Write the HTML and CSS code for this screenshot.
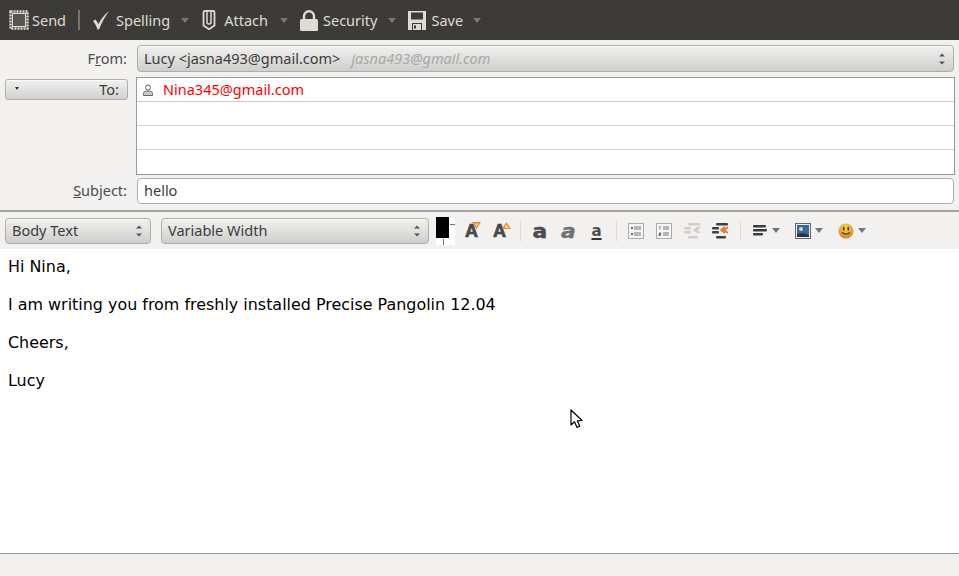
FILE: index.html
```html
<!DOCTYPE html>
<html lang="en">
<head>
<meta charset="utf-8">
<title>Write: hello</title>
<link rel="stylesheet" href="styles.css">
</head>
<body>
<header class="toolbar">
  <div class="tool send">
    <svg class="ticon" width="20" height="20" viewBox="0 0 20 20"><rect x="1.500" y="1.500" width="17" height="17" fill="none" stroke="#dfdbd2" stroke-width="2.400" stroke-dasharray="2 1"/><rect x="3.500" y="3.500" width="13" height="13" fill="#57554f" stroke="#dfdbd2"/></svg>
    <span>Send</span>
  </div>
  <div class="tsep"></div>
  <div class="tool spelling">
    <svg class="ticon" width="18" height="20" viewBox="0 0 18 20"><path d="M1 11 L3.500 9.500 L6.500 14 C9 9 12.500 4.500 17 1 C13 6.500 10 12 7 19.500 L5.500 19.500 C4.500 16.500 3 13.500 1 11 Z" fill="#dfdbd2"/></svg>
    <span>Spelling</span><i class="tarrow"></i>
  </div>
  <div class="tool attach">
    <svg class="ticon" width="14" height="20" viewBox="0 0 14 20"><path d="M1.500 2.500 C1.500 1.200 2.500 .8 3.500 .8 H10.500 C11.500 .8 12.500 1.200 12.500 2.500 V15.500 L7 19.200 L1.500 15.500 Z" fill="none" stroke="#dfdbd2" stroke-width="1.800"/><path d="M5 1 V12.500 C5 14.500 9 14.500 9 12.500 V1" fill="none" stroke="#dfdbd2" stroke-width="1.500"/></svg>
    <span>Attach</span><i class="tarrow"></i>
  </div>
  <div class="tool security">
    <svg class="ticon" width="18" height="21" viewBox="0 0 18 21"><path d="M4 10 V6.500 C4 -.5 14 -.5 14 6.500 V10" fill="none" stroke="#dfdbd2" stroke-width="2.400"/><rect x="0" y="9" width="18" height="12" rx="1.500" fill="#dfdbd2"/></svg>
    <span>Security</span><i class="tarrow"></i>
  </div>
  <div class="tool save">
    <svg class="ticon" width="18" height="19" viewBox="0 0 18 19"><path d="M0 0 H18 V19 H0 Z" fill="#dfdbd2"/><rect x="3" y="1.500" width="12" height="7" fill="#3c3b37"/><rect x="4" y="12" width="10" height="7" fill="#3c3b37"/><rect x="5" y="13" width="8" height="6" fill="#dfdbd2"/><rect x="6" y="14.500" width="2" height="3" fill="#3c3b37"/></svg>
    <span>Save</span><i class="tarrow"></i>
  </div>
</header>

<section class="headers">
  <div class="from-row">
    <label class="lbl">F<u>r</u>om:</label>
    <div class="combo from-combo">
      <span class="from-name">Lucy &lt;jasna493@gmail.com&gt;</span>
      <em class="from-ident">jasna493@gmail.com</em>
      <span class="stepper"><i class="up"></i><i class="down"></i></span>
    </div>
  </div>
  <div class="to-row">
    <div class="to-btn"><i class="mini-arrow"></i><span>To:</span></div>
    <div class="to-list">
      <div class="to-line">
        <svg class="person" width="10" height="12" viewBox="0 0 10 12"><circle cx="5" cy="3.500" r="2.500" fill="#fff" stroke="#666"/><path d="M.5 11.500 V9.500 C.5 7.500 2.500 7 5 7 C7.500 7 9.500 7.500 9.500 9.500 V11.500 Z" fill="#ccc" stroke="#666"/></svg>
        <span class="addr">Nina345@gmail.com</span>
      </div>
      <div class="to-line"></div>
      <div class="to-line"></div>
      <div class="to-line"></div>
    </div>
  </div>
  <div class="subject-row">
    <label class="lbl"><u>S</u>ubject:</label>
    <div class="subject-input">hello</div>
  </div>
</section>

<section class="format">
  <div class="combo style-combo"><span>Body Text</span><span class="stepper"><i class="up"></i><i class="down"></i></span></div>
  <div class="combo font-combo"><span>Variable Width</span><span class="stepper"><i class="up"></i><i class="down"></i></span></div>
  <div class="color-well"><span class="fg"></span><span class="tick-h"></span><span class="tick-v"></span></div>
  <div class="ficon-a">
    <span class="big-a">A</span><svg class="a-badge" width="9" height="7" viewBox="0 0 9 7"><path d="M0 0 H9 L4.500 7 Z" fill="#f08a24"/><path d="M2.500 1.500 H6.500 L4.500 4.500 Z" fill="#f7d9a8"/></svg>
  </div>
  <div class="ficon-a second">
    <span class="big-a">A</span><svg class="a-badge" width="9" height="7" viewBox="0 0 9 7"><path d="M0 7 H9 L4.500 0 Z" fill="#f08a24"/><path d="M2.500 6 H6.500 L4.500 2.500 Z" fill="#f7d9a8"/></svg>
  </div>
  <div class="fsep first"></div>
  <span class="style-a bold">a</span>
  <span class="style-a italic">a</span>
  <span class="style-a under">a</span>
  <div class="fsep second"></div>
  <svg class="list-ic ul" width="16" height="16" viewBox="0 0 16 16"><rect x=".5" y=".5" width="15" height="15" fill="#f7f6f5" stroke="#aaa"/><path d="M6 4 H13 M6 6 H13 M6 10 H13 M6 12 H13" stroke="#777"/><rect x="3" y="4" width="2" height="2" fill="#666"/><rect x="3" y="10" width="2" height="2" fill="#666"/></svg>
  <svg class="list-ic ol" width="16" height="16" viewBox="0 0 16 16"><rect x=".5" y=".5" width="15" height="15" fill="#f7f6f5" stroke="#aaa"/><path d="M7 4 H13 M7 6 H13 M7 10 H13 M7 12 H13 M4 3 V6.500 M3 10 H5 V11 H3 V12.500 H5" stroke="#777"/></svg>
  <svg class="list-ic out" width="16" height="16" viewBox="0 0 16 16"><g fill="#cfcecb"><rect x="4" y="0" width="12" height="2.500" rx="1"/><rect x="0" y="4" width="7" height="2.500" rx="1"/><rect x="0" y="8" width="7" height="2.500" rx="1"/><rect x="4" y="13" width="10" height="2.500" rx="1"/></g><path d="M14 4 L10 7 L14 10 M16 4 L12 7 L16 10" fill="none" stroke="#cfcecb" stroke-width="1.500"/></svg>
  <svg class="list-ic in" width="16" height="16" viewBox="0 0 16 16"><g fill="#3f3f3f"><rect x="4" y="0" width="12" height="2.500" rx="1"/><rect x="0" y="4" width="7" height="2.500" rx="1"/><rect x="0" y="8" width="7" height="2.500" rx="1"/><rect x="4" y="13" width="10" height="2.500" rx="1"/></g><path d="M13 4 L9 7 L13 10 M16 4 L12 7 L16 10" fill="none" stroke="#e8762a" stroke-width="1.600"/></svg>
  <div class="fsep third"></div>
  <svg class="align-ic" width="14" height="11" viewBox="0 0 14 11"><g fill="#3c3c3c"><rect width="13" height="2.500" rx="1"/><rect y="4" width="14" height="2.500" rx="1"/><rect y="8" width="10" height="2.500" rx="1"/></g></svg>
  <i class="farrow align-arrow"></i>
  <svg class="image-ic" width="16" height="16" viewBox="0 0 16 16"><rect x=".5" y=".5" width="15" height="15" fill="#eee" stroke="#666"/><rect x="2" y="2" width="12" height="12" fill="#3a6a9a"/><circle cx="6" cy="6" r="2" fill="#d8d8c0"/><path d="M2 14 L2 11 L8 10 L14 12 V14 Z" fill="#26364a"/></svg>
  <i class="farrow"></i>
  <svg class="smile-ic" width="16" height="16" viewBox="0 0 16 16"><defs><radialGradient id="sm" cx=".5" cy=".3" r=".8"><stop offset="0" stop-color="#f8d848"/><stop offset="1" stop-color="#d9761c"/></radialGradient></defs><circle cx="8" cy="8" r="7.500" fill="url(#sm)"/><rect x="5" y="4" width="1.500" height="3.500" fill="#333"/><rect x="9.500" y="4" width="1.500" height="3.500" fill="#333"/><path d="M4 9.500 C6 11.500 10 11.500 12 9.500" fill="none" stroke="#433" stroke-width="1.200"/></svg>
  <i class="farrow"></i>
</section>

<main class="body-edit">
  <p>Hi Nina,</p>
  <p>I am writing you from freshly installed Precise Pangolin 12.04</p>
  <p>Cheers,</p>
  <p>Lucy</p>
  <svg class="cursor" width="14" height="21" viewBox="0 0 14 21"><path d="M1 1 V16 L4.500 12.800 L7 18.500 L9.800 17.300 L7.300 11.800 L12 11.500 Z" fill="#fff" stroke="#000" stroke-width="1.200" stroke-linejoin="round"/></svg>
</main>

<footer class="status"></footer>
</body>
</html>
```
FILE: styles.css
```css
* { box-sizing: border-box; }
html, body { margin: 0; padding: 0; }
body {
  width: 959px;
  height: 576px;
  overflow: hidden;
  background: #f2f1f0;
  font-family: "Noto Sans", "Open Sans", sans-serif;
  font-size: 14.5px;
  color: #3c3c3c;
  display: flex;
  flex-direction: column;
}

/* main dark toolbar */
.toolbar {
  height: 40px;
  flex: none;
  background: #3c3b37;
  color: #dfdbd2;
  display: flex;
  align-items: center;
  padding-left: 9px;
}
.tool { display: flex; align-items: center; }
.ticon { flex: none; display: block; }
.send span { margin-left: 3px; }
.tsep { width: 2px; height: 20px; background: #77756f; margin-left: 12px; }
.spelling { margin-left: 12px; }
.spelling span { margin-left: 6px; }
.attach { margin-left: 13px; }
.attach span { margin-left: 8px; }
.security { margin-left: 12px; }
.security span { margin-left: 5px; }
.save { margin-left: 12px; }
.save span { margin-left: 5px; }
.tarrow {
  width: 0; height: 0;
  margin-left: 10px;
  border-left: 4.5px solid transparent;
  border-right: 4.5px solid transparent;
  border-top: 5px solid #7a7873;
}
.spelling .tarrow { margin-left: 11px; }
.attach .tarrow { margin-left: 12px; }
.security .tarrow { margin-left: 11px; }

/* address header */
.headers {
  height: 172px;
  flex: none;
  padding-top: 5px;
  border-bottom: 2px solid #a3a19e;
}
.from-row, .subject-row { display: flex; align-items: center; padding-right: 5px; }
.lbl {
  width: 127px;
  text-align: right;
  flex: none;
  color: #4c4c4c;
  padding-bottom: 2px;
}
.combo {
  border: 1px solid #b0aeaa;
  border-radius: 4px;
  background: linear-gradient(#f1f1f0, #cfcecc);
  display: flex;
  align-items: center;
  position: relative;
  box-shadow: inset 0 1px 0 #fafafa;
  padding-bottom: 2px;
}
.from-combo {
  margin-left: 10px;
  flex: 1;
  height: 27px;
  padding-left: 6px;
}
.from-ident { margin-left: 11px; color: #a8a7a5; }
.stepper {
  position: absolute;
  right: 8px;
  top: 50%;
  transform: translateY(-50%);
  display: flex;
  flex-direction: column;
  gap: 5px;
}
.stepper i { display: block; width: 0; height: 0; border-left: 3px solid transparent; border-right: 3px solid transparent; }
.stepper .up { border-bottom: 3px solid #555; }
.stepper .down { border-top: 3px solid #555; }

.to-row { display: flex; padding: 5px 4px 0 5px; align-items: flex-start; }
.to-btn {
  width: 123px;
  height: 21px;
  margin-top: 2px;
  border: 1px solid #b0aeaa;
  border-radius: 3px;
  background: linear-gradient(#f1f1f0, #d2d1cf);
  display: flex;
  align-items: center;
  justify-content: space-between;
  padding: 0 8px 2px 9px;
  box-shadow: inset 0 1px 0 #fafafa;
}
.mini-arrow { width: 0; height: 0; border-left: 2.5px solid transparent; border-right: 2.5px solid transparent; border-top: 3px solid #333; }
.to-list {
  margin-left: 8px;
  flex: 1;
  height: 98px;
  background: #fff;
  border: 1px solid #9c9a97;
}
.to-line {
  height: 24px;
  border-bottom: 1px solid #c9c9e4;
  display: flex;
  align-items: center;
  padding-left: 6px;
}
.to-line + .to-line { border-bottom-color: #cfcfcf; }
.to-line:last-child { border-bottom: 0; }
.person { flex: none; }
.addr { color: #ff0000; margin: 0 0 2px 10px; }

.subject-row { margin-top: 3px; }
.subject-input {
  margin-left: 10px;
  flex: 1;
  height: 26px;
  background: #fff;
  border: 1px solid #b0aeaa;
  border-radius: 4px;
  padding: 0 0 2px 6px;
  display: flex;
  align-items: center;
  color: #3c3c3c;
}

/* format toolbar */
.format {
  height: 37px;
  flex: none;
  display: flex;
  align-items: center;
  padding-left: 5px;
  position: relative;
}
.style-combo { width: 146px; height: 26px; padding-left: 6px; }
.font-combo { width: 268px; height: 26px; padding-left: 6px; margin-left: 10px; }
.color-well { position: relative; width: 19px; height: 28px; margin-left: 7px; background: #fff; flex: none; }
.fg { position: absolute; left: 0; top: 0; width: 13px; height: 21px; background: #000; }
.tick-h { position: absolute; left: 14px; top: 7px; width: 5px; height: 1px; background: #777; }
.tick-v { position: absolute; left: 7px; top: 22px; width: 1px; height: 6px; background: #777; }
.ficon-a { position: relative; width: 16px; height: 18px; margin-left: 9px; flex: none; }
.ficon-a.second { width: 18px; margin-left: 12px; }
.big-a {
  position: absolute;
  left: 1px; top: -1px;
  font: bold 18px "Liberation Sans", sans-serif;
  color: #4b4d4f;
  -webkit-text-stroke: .7px #3d3f41;
}
.a-badge { position: absolute; right: -1px; top: 0; }
.fsep { width: 1px; height: 20px; background: #dcdad7; flex: none; }
.fsep.first { margin-left: 10px; }
.fsep.second { margin-left: 12px; }
.fsep.third { margin-left: 12px; }
.style-a {
  flex: none;
  width: 16px;
  text-align: center;
  font: bold 19px "DejaVu Sans", sans-serif;
  line-height: 18px;
  margin-left: 12px;
  color: #4b4d4f;
  -webkit-text-stroke: .4px #3d3f41;
  transform: scaleX(1.15);
}
.style-a.bold { margin-left: 11px; }
.style-a.italic { font-style: italic; width: 17px; color: #727272; -webkit-text-stroke: .3px #666; }
.style-a.under {
  width: 15px;
  font-size: 15px;
  color: #4b4d4f;
  -webkit-text-stroke: 0;
  text-decoration: underline 2px #333;
  text-underline-offset: 2px;
  transform: none;
}
.list-ic { flex: none; }
.list-ic.ul { margin-left: 11px; }
.list-ic.ol { margin-left: 12px; }
.list-ic.out { margin-left: 12px; }
.list-ic.in { margin-left: 12px; }
.align-ic { margin-left: 12px; flex: none; }
.farrow {
  width: 0; height: 0;
  margin-left: 4px;
  border-left: 4px solid transparent;
  border-right: 4px solid transparent;
  border-top: 5px solid #777;
  flex: none;
}
.farrow.align-arrow { margin-left: 5px; }
.image-ic { margin-left: 15px; flex: none; }
.smile-ic { margin-left: 15px; flex: none; }

/* message body */
.body-edit {
  flex: none;
  height: 304px;
  background: #fff;
  padding: 8px 0 0 8px;
  position: relative;
  font-family: "DejaVu Sans", sans-serif;
  font-size: 15.93px;
  color: #000;
  line-height: 19px;
}
.body-edit p { margin: 0 0 19px; }
.cursor { position: absolute; left: 570px; top: 160px; }

.status {
  flex: 1;
  border-top: 1px solid #9a9996;
  background: #f2f1f0;
}
```
